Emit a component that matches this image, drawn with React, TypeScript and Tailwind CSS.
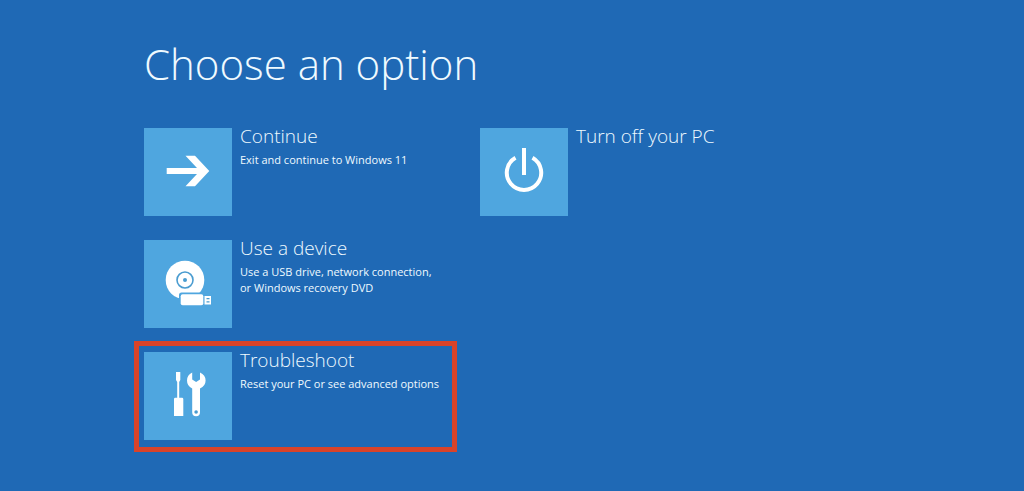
import React from "react";

type Option = {
  title: string;
  lines?: string[];
  icon: React.ReactNode;
  highlighted?: boolean;
};

/** All tile icons share an 88x88 box, the size of the tile itself. */
function TileIcon({ children }: { children: React.ReactNode }) {
  return (
    <svg viewBox="0 0 88 88" className="h-22 w-22" fill="none" aria-hidden="true">
      {children}
    </svg>
  );
}

const arrowIcon = (
  <TileIcon>
    <path d="M22.7 40H53L41.5 27.7H51L65.3 43L51 58.3H41.5L53 46H22.7Z" fill="#fff" />
  </TileIcon>
);

const discIcon = (
  <TileIcon>
    <circle cx="41" cy="40" r="19.3" fill="#fff" />
    <circle cx="41" cy="40" r="8" stroke="#4a9cd0" strokeWidth="1.6" />
    <circle cx="41" cy="40" r="2" fill="#4a9cd0" />
    {/* usb stick, with a tile-coloured gap around it */}
    <rect x="35" y="52.5" width="34" height="14" rx="2.5" fill="#4fa6df" />
    <rect x="36.7" y="54.2" width="22.6" height="11" rx="2" fill="#fff" />
    <path d="M60.5 56H67V64.5H60.5Z" fill="#fff" />
    <path d="M62.5 58H65.5V59.3H62.5ZM62.5 61.2H65.5V62.5H62.5Z" fill="#4a9cd0" />
  </TileIcon>
);

const toolsIcon = (
  <TileIcon>
    {/* screwdriver */}
    <path
      d="M32 20H36.3V28L35.2 30V45.7H38Q39.3 45.7 39.3 47V64H30V47Q30 45.7 31.3 45.7H33.2V30L32 28Z"
      fill="#fff"
    />
    {/* wrench */}
    <path
      d="M48.2 20.5Q43 23 43 28.5Q43 34 48.2 36.5V60.3A3.9 3.9 0 0 0 56 60.3V36.5Q61.6 34 61.6 28.5Q61.6 23 56 20.5V27.5L52.1 30L48.2 27.5Z"
      fill="#fff"
    />
    <circle cx="52.1" cy="60" r="1.8" fill="#4a9cd0" />
  </TileIcon>
);

const powerIcon = (
  <TileIcon>
    <path d="M35.5 29.8A17.2 17.2 0 1 0 52.5 29.8" stroke="#fff" strokeWidth="4" />
    <path d="M44 20V47" stroke="#fff" strokeWidth="4" />
  </TileIcon>
);

const mainOptions: Option[] = [
  { title: "Continue", lines: ["Exit and continue to Windows 11"], icon: arrowIcon },
  {
    title: "Use a device",
    lines: ["Use a USB drive, network connection,", "or Windows recovery DVD"],
    icon: discIcon,
  },
  {
    title: "Troubleshoot",
    lines: ["Reset your PC or see advanced options"],
    icon: toolsIcon,
    highlighted: true,
  },
];

const powerOptions: Option[] = [{ title: "Turn off your PC", icon: powerIcon }];

function OptionButton({ option }: { option: Option }) {
  return (
    <button type="button" className="relative flex w-full items-start gap-2 text-left">
      <span className="shrink-0 bg-[#4fa6df]">{option.icon}</span>
      <span className="flex flex-col whitespace-nowrap">
        <span className="-mt-1 mb-1 text-[19px] leading-6 font-light">{option.title}</span>
        {option.lines?.map((line) => (
          <span key={line} className="text-[11px] leading-4">
            {line}
          </span>
        ))}
      </span>
      {option.highlighted && (
        <span className="pointer-events-none absolute -top-[11px] -right-px -bottom-3 -left-[10px] border-[5px] border-[#d9432a]" />
      )}
    </button>
  );
}

function OptionColumn({ options }: { options: Option[] }) {
  return (
    <div className="flex flex-col gap-6">
      {options.map((option) => (
        <OptionButton key={option.title} option={option} />
      ))}
    </div>
  );
}

export default function App() {
  return (
    <main className="min-h-screen bg-[#1f69b5] px-36 pt-9 pb-10 font-['Open_Sans','Noto_Sans',sans-serif] text-[#effaff]">
      <h1 className="mb-9 text-[42px] leading-[56px] font-light whitespace-nowrap">Choose an option</h1>
      <div className="grid max-w-[648px] grid-cols-2 gap-6">
        <OptionColumn options={mainOptions} />
        <OptionColumn options={powerOptions} />
      </div>
    </main>
  );
}
